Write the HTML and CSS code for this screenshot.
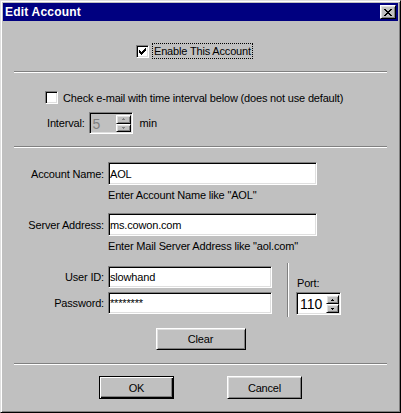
FILE: index.html
```html
<!DOCTYPE html>
<html lang="en">
<head>
    <meta charset="UTF-8">
    <title>Edit Account</title>
    <link rel="stylesheet" href="styles.css">
</head>
<body>
    <div class="window">
        <div class="titlebar">
            <span class="title">Edit Account</span>
            <span class="close-btn">
                <svg width="8" height="7" viewBox="0 0 8 7"><path d="M0 0h2v1h-2z M6 0h2v1h-2z M1 1h2v1h-2z M5 1h2v1h-2z M2 2h4v1h-4z M3 3h2v1h-2z M2 4h4v1h-4z M1 5h2v1h-2z M5 5h2v1h-2z M0 6h2v1h-2z M6 6h2v1h-2z" fill="#000"/></svg>
            </span>
        </div>
        <div class="body">
            <div class="enable-row">
                <span class="checkbox">
                    <svg width="7" height="7" viewBox="0 0 7 7"><path d="M6 0h1v1h-1z M5 1h2v1h-2z M0 2h1v1h-1z M4 2h3v1h-3z M0 3h2v1h-2z M3 3h3v1h-3z M0 4h5v1h-5z M1 5h3v1h-3z M2 6h1v1h-1z" fill="#000"/></svg>
                </span>
                <span class="focus-label">Enable This Account</span>
            </div>
            <div class="sep sep-first"></div>
            <div class="check-row">
                <span class="checkbox"></span>
                <span>Check e-mail with time interval below (does not use default)</span>
            </div>
            <div class="interval-row">
                <span>Interval:</span>
                <div class="spin spin-interval disabled">
                    <span class="spin-value">5</span>
                    <div class="spin-btns">
                        <span class="spin-btn"><svg width="3" height="2" viewBox="0 0 3 2"><path d="M1 0h1v1h1v1h-3v-1h1z"/></svg></span>
                        <span class="spin-btn"><svg width="3" height="2" viewBox="0 0 3 2"><path d="M0 0h3v1h-1v1h-1v-1h-1z"/></svg></span>
                    </div>
                </div>
                <span>min</span>
            </div>
            <div class="sep sep-second"></div>

            <div class="field-row account-row">
                <span class="field-label">Account Name:</span>
                <input class="field field-wide" type="text" value="AOL">
            </div>
            <div class="hint">Enter Account Name like "AOL"</div>

            <div class="field-row server-row">
                <span class="field-label">Server Address:</span>
                <input class="field field-wide" type="text" value="ms.cowon.com">
            </div>
            <div class="hint">Enter Mail Server Address like "aol.com"</div>

            <div class="login-block">
                <div class="login-fields">
                    <div class="field-row">
                        <span class="field-label">User ID:</span>
                        <input class="field field-short" type="text" value="slowhand">
                    </div>
                    <div class="field-row">
                        <span class="field-label">Password:</span>
                        <input class="field field-short" type="text" value="********">
                    </div>
                </div>
                <div class="vsep"></div>
                <div class="port-col">
                    <span class="port-label">Port:</span>
                    <div class="spin spin-port">
                        <span class="spin-value">110</span>
                        <div class="spin-btns">
                            <span class="spin-btn"><svg width="3" height="2" viewBox="0 0 3 2"><path d="M1 0h1v1h1v1h-3v-1h1z"/></svg></span>
                            <span class="spin-btn"><svg width="3" height="2" viewBox="0 0 3 2"><path d="M0 0h3v1h-1v1h-1v-1h-1z"/></svg></span>
                        </div>
                    </div>
                </div>
            </div>

            <button class="btn btn-clear">Clear</button>
            <div class="sep sep-third"></div>
            <div class="actions">
                <button class="btn btn-default">OK</button>
                <button class="btn">Cancel</button>
            </div>
        </div>
    </div>
</body>
</html>
```

FILE: styles.css
```css
body {
    margin: 0;
    font-family: 'Liberation Sans', Arial, sans-serif;
    font-size: 11px;
    letter-spacing: -0.17px;
    color: #000;
}

.window {
    width: 401px;
    height: 413px;
    box-sizing: border-box;
    background-color: #c0c0c0;
    border: 1px solid;
    border-color: #dfdfdf #000 #000 #dfdfdf;
    box-shadow: inset 1px 1px #fff, inset -1px -1px #808080;
    padding: 2px;
}

.titlebar {
    height: 18px;
    background-color: #000080;
    color: #fff;
    display: flex;
    align-items: center;
    justify-content: space-between;
    padding: 0 2px;
    font-size: 12px;
    font-weight: bold;
    letter-spacing: 0.2px;
}

.close-btn {
    width: 16px;
    height: 14px;
    box-sizing: border-box;
    background-color: #c0c0c0;
    border: 1px solid;
    border-color: #fff #000 #000 #fff;
    box-shadow: inset 1px 1px #dfdfdf, inset -1px -1px #808080;
    display: flex;
    align-items: center;
    justify-content: center;
}

.body {
    display: flex;
    flex-direction: column;
    padding: 0 11px;
}

.checkbox {
    width: 13px;
    height: 13px;
    box-sizing: border-box;
    flex-shrink: 0;
    background-color: #fff;
    border: 1px solid;
    border-color: #808080 #fff #fff #808080;
    box-shadow: inset 1px 1px #000, inset -1px -1px #dfdfdf;
    display: flex;
    align-items: center;
    justify-content: center;
}

.enable-row {
    display: flex;
    align-items: center;
    height: 16px;
    margin-top: 22px;
    padding-left: 122px;
    gap: 3px;
}

.focus-label {
    height: 16px;
    box-sizing: border-box;
    border: 1px dotted #000;
    padding: 0 1px;
    line-height: 14px;
}

.sep {
    height: 0;
    border-top: 1px solid #808080;
    border-bottom: 1px solid #fff;
}

.sep-first {
    margin-top: 12px;
}

.check-row {
    display: flex;
    align-items: center;
    height: 13px;
    margin-top: 18px;
    padding-left: 31px;
    gap: 5px;
}

.interval-row {
    display: flex;
    align-items: center;
    margin-top: 8px;
    padding-left: 33px;
    gap: 4px;
}

.interval-row .spin {
    margin-right: 3px;
}

.spin {
    display: flex;
    height: 22px;
    box-sizing: border-box;
    background-color: #fff;
    border: 1px solid;
    border-color: #808080 #fff #fff #808080;
    box-shadow: inset 1px 1px #000, inset -1px -1px #dfdfdf;
    padding: 2px 1px 1px 2px;
}

.spin-value {
    flex-grow: 1;
    font-size: 14px;
    line-height: 18px;
    letter-spacing: 0;
    padding-left: 1px;
}

.spin-btns {
    display: flex;
    flex-direction: column;
    width: 15px;
}

.spin-btn {
    flex: 1;
    box-sizing: border-box;
    background-color: #c0c0c0;
    border: 1px solid;
    border-color: #fff #000 #000 #fff;
    box-shadow: inset 1px 1px #dfdfdf, inset -1px -1px #808080;
    display: flex;
    align-items: center;
    justify-content: center;
}

.spin-btn svg {
    fill: #000;
}

.spin-interval {
    width: 44px;
}

.disabled {
    background-color: #c0c0c0;
    color: #808080;
}

.disabled .spin-btn svg {
    fill: #808080;
}

.sep-second {
    margin-top: 12px;
}

.field-row {
    display: flex;
    align-items: center;
}

.field-label {
    width: 90px;
    margin-right: 4px;
    text-align: right;
}

.field {
    box-sizing: border-box;
    height: 22px;
    margin: 0;
    padding: 0 1px;
    font-family: 'Liberation Sans', Arial, sans-serif;
    font-size: 11px;
    letter-spacing: -0.17px;
    color: #000;
    background-color: #fff;
    border: 1px solid;
    border-color: #808080 #fff #fff #808080;
    box-shadow: inset 1px 1px #000, inset -1px -1px #dfdfdf;
    outline: none;
}

.field-wide {
    width: 209px;
    height: 23px;
}

.field-short {
    width: 164px;
}

.account-row {
    margin-top: 14px;
}

.server-row {
    margin-top: 11px;
}

.hint {
    margin-top: 4px;
    padding-left: 94px;
    line-height: 13px;
}

.login-block {
    display: flex;
    margin-top: 10px;
}

.login-fields {
    display: flex;
    flex-direction: column;
    gap: 4px;
    padding-top: 3px;
}

.vsep {
    width: 0;
    height: 54px;
    margin-left: 15px;
    border-left: 1px solid #808080;
    border-right: 1px solid #fff;
}

.port-col {
    display: flex;
    flex-direction: column;
    margin-left: 7px;
    padding-top: 14px;
    gap: 2px;
}

.port-label {
    line-height: 13px;
    padding-left: 1px;
}

.spin-port {
    width: 45px;
    height: 23px;
}

.spin-port .spin-btns {
    width: 13px;
}

.btn {
    box-sizing: border-box;
    width: 75px;
    height: 23px;
    padding: 0;
    font-family: 'Liberation Sans', Arial, sans-serif;
    font-size: 11px;
    letter-spacing: -0.17px;
    color: #000;
    background-color: #c0c0c0;
    border: 1px solid;
    border-color: #fff #000 #000 #fff;
    box-shadow: inset 1px 1px #dfdfdf, inset -1px -1px #808080;
}

.btn-default {
    border-color: #000;
    box-shadow: inset 1px 1px #fff, inset -1px -1px #000, inset -2px -2px #808080;
}

.btn-clear {
    align-self: center;
    width: 90px;
    height: 22px;
    margin-top: 11px;
}

.sep-third {
    margin-top: 13px;
}

.actions {
    display: flex;
    justify-content: center;
    gap: 53px;
    margin-top: 11px;
}
```
